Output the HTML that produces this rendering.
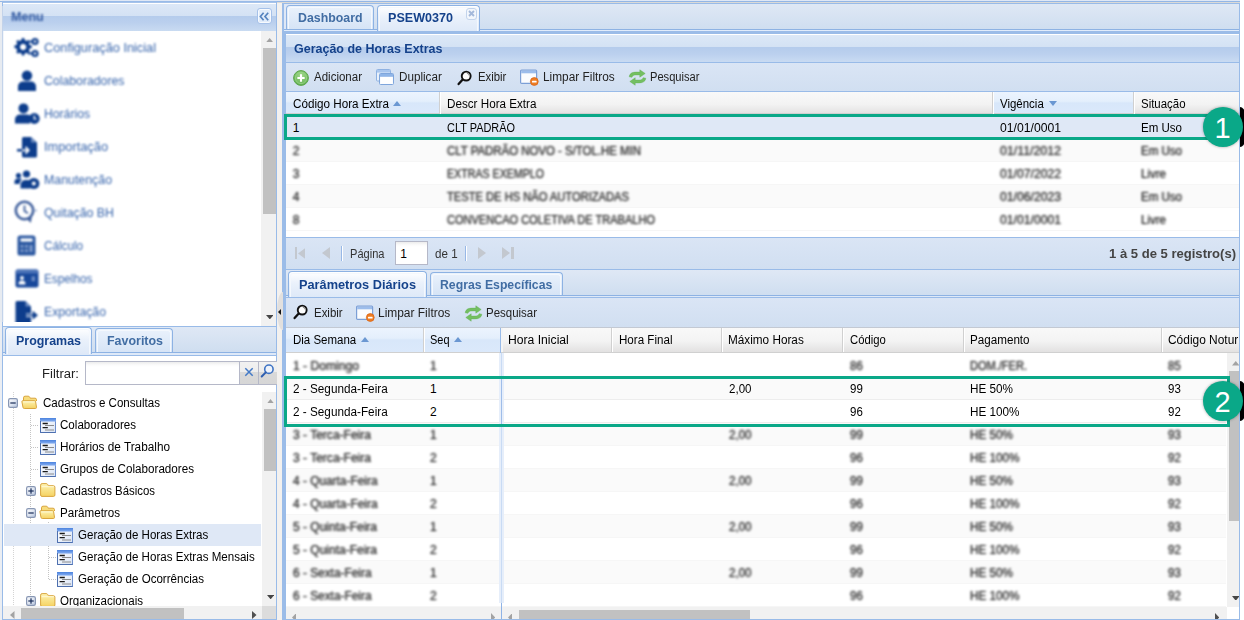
<!DOCTYPE html>
<html>
<head>
<meta charset="utf-8">
<title>PSEW0370</title>
<style>
*{box-sizing:border-box;margin:0;padding:0}
html,body{width:1244px;height:620px;overflow:hidden;background:#fff}
body{font-family:"Liberation Sans",sans-serif;font-size:12px;color:#000;position:relative}
.a{position:absolute}
.t{position:absolute;white-space:nowrap;line-height:16px;height:16px;transform-origin:0 50%}
.hd{background:linear-gradient(#dce8f7 0%,#d4e2f4 43%,#b5ccec 46%,#bbd0ee 70%,#c9dbf2 100%)}
.strip{background:linear-gradient(#dfe8f5,#cfdef0)}
.tb{background:linear-gradient(#dae5f5,#d1dff1)}
.gh{background:linear-gradient(#f9f9f9 0%,#f3f3f3 55%,#e2e1e1 100%)}
.ghs{background:linear-gradient(#ecf4fe 0%,#e4effc 42%,#d8e7fa 50%,#dbe9fb 100%)}
.tab{position:absolute;border:1px solid #8db2e3;border-bottom:none;border-radius:4px 4px 0 0;background:linear-gradient(#eaf2fc,#d6e4f6)}
.tab i{position:absolute;left:1px;right:1px;top:1px;bottom:0;border:1px solid #f4f8fd;border-bottom:none;border-radius:3px 3px 0 0}
.tab.on{background:linear-gradient(#ffffff,#eaf1fb 45%,#dee9f8)}
.row{position:absolute;height:23px;border-bottom:1px solid #ededed;background:#fff}
.alt{background:#fafafa}
.sb{background:#f1f1f1}
.th{background:#c1c1c1}
</style>
</head>
<body>
<div class="a " style="left:0px;top:0px;width:1240px;height:620px;background:#dfe8f6"></div>
<div class="a " style="left:0px;top:0px;width:2px;height:620px;background:#ebeef3"></div>
<div class="a " style="left:277px;top:2px;width:5px;height:618px;background:#f3f1ef"></div>
<div class="a " style="left:0px;top:1px;width:1240px;height:1px;background:#93b6e6"></div>
<!-- LEFT -->
<div class="a " style="left:2px;top:1px;width:275px;height:619px;border:1px solid #99bbe8;border-bottom:none;background:#fff"></div>
<div class="a " style="left:3px;top:2px;width:273px;height:1px;background:#a6c3ea"></div>
<div class="a " style="left:3px;top:3px;width:273px;height:1px;background:#fff"></div>
<div class="a hd" style="left:3px;top:4px;width:273px;height:27px;"></div>
<div class="a " style="left:0px;top:6px;width:2px;height:316px;background:#e7ebf1"></div>
<div class="a " style="left:2px;top:6px;width:1px;height:316px;background:#c3d3ea"></div>
<div class="a " style="left:3px;top:31px;width:1px;height:291px;background:#f1f5fb"></div>
<div class="t" style="top:9px;font-size:12.5px;left:10.70px;transform:scaleX(1.0018);font-weight:bold;color:#2f57a0;filter:blur(1px);">Menu</div>
<div class="a " style="left:257px;top:8px;width:15px;height:16px;border:1px solid #a5c1e9;border-radius:3px;background:#e1ecfa;box-shadow:inset 0 0 0 1px #f7fafe"></div>
<svg class="a" style="left:259px;top:12px;" width="11" height="9" viewBox="0 0 11 9"><path d="M4.600 0.800L1.400 4.500L4.600 8.200M9.200 0.800L6 4.500L9.200 8.200" fill="none" stroke="#5583bf" stroke-width="1.700"/></svg>
<div class="a sb" style="left:261px;top:31px;width:15px;height:295px;"></div>
<div class="a th" style="left:263px;top:48px;width:13px;height:166px;"></div>
<svg class="a" style="left:265.8px;top:37.7px;" width="7.3" height="4.4" viewBox="0 0 7.3 4.4"><polygon points="0,4.4 3.65,0 7.3,4.4" fill="#a3a3a3"/></svg>
<svg class="a" style="left:265.8px;top:314.8px;" width="7.6" height="4.4" viewBox="0 0 7.6 4.4"><polygon points="0,0 7.6,0 3.8,4.4" fill="#454545"/></svg>
<!-- menu items (blurred) -->
<div class="a" style="left:0;top:31px;width:262px;height:291px;overflow:hidden"><div class="a" style="filter:blur(0.8px);left:0;top:0;width:262px;height:300px">
 <!-- 1 Configuracao: gears -->
 <svg class="a" style="left:14px;top:6px" width="26" height="21" viewBox="0 0 26 21">
  <g fill="#0d3d8c">
   <path d="M8 1 l2.2 0 l.5 2 l1.8 .9 l1.8-1 l1.6 1.6 l-1 1.8 l.8 1.7 l2 .6 l0 2.3 l-2 .6 l-.8 1.8 l1 1.8 l-1.6 1.6 l-1.8-1 l-1.8 .8 l-.5 2 l-2.2 0 l-.6-2 l-1.8-.8 l-1.8 1 l-1.6-1.6 l1-1.8 l-.8-1.8 l-2-.6 l0-2.3 l2-.6 l.8-1.7 l-1-1.8 l1.6-1.6 l1.8 1 l1.8-.9 z M9.1 6.8 a3.2 3.2 0 1 0 .01 0 z" fill-rule="evenodd"/>
   <circle cx="21" cy="4.5" r="3.6"/><circle cx="21" cy="16.5" r="3.6"/>
   <rect x="14" y="3.7" width="6" height="1.8"/><rect x="14" y="15.6" width="6" height="1.8"/>
  </g>
  <circle cx="21" cy="4.5" r="1.3" fill="#fff"/><circle cx="21" cy="16.5" r="1.3" fill="#fff"/>
 </svg>
 <!-- 2 Colaboradores: user -->
 <svg class="a" style="left:17px;top:39px" width="20" height="22" viewBox="0 0 20 22">
  <g fill="#0d3d8c"><circle cx="10" cy="5.6" r="5.2"/><path d="M1 21 v-4.5 a5 5 0 0 1 5-5 h8 a5 5 0 0 1 5 5 v4.5 z"/></g>
 </svg>
 <!-- 3 Horarios: user + clock -->
 <svg class="a" style="left:14px;top:72px" width="26" height="22" viewBox="0 0 26 22">
  <g fill="#0d3d8c"><circle cx="9.5" cy="5.4" r="5"/><path d="M1 20.5 v-4 a5 5 0 0 1 5-5 h7 a5 5 0 0 1 3 1 v8 z"/><circle cx="20.3" cy="15.5" r="5.4"/></g>
  <path d="M20.3 12.6 v3.2 h2.2" stroke="#fff" stroke-width="1.3" fill="none"/>
 </svg>
 <!-- 4 Importacao: file import -->
 <svg class="a" style="left:16px;top:105px" width="22" height="22" viewBox="0 0 22 22">
  <path d="M6 1 h9 l6 5.5 v13.5 a1.5 1.5 0 0 1 -1.5 1.5 h-12 a1.5 1.5 0 0 1 -1.5 -1.5 v-4.5 h-5 v-2.4 h5 v-10.6 a1.5 1.5 0 0 1 1.5 -1.5 z" fill="#0d3d8c"/>
  <path d="M6 14.3 h5.5 M9.5 11 l3.2 3.3 l-3.2 3.3" stroke="#fff" stroke-width="1.8" fill="none"/>
  <path d="M15 1 v5.5 h6 z" fill="#6d8cc0"/>
 </svg>
 <!-- 5 Manutencao: users cog -->
 <svg class="a" style="left:14px;top:139px" width="26" height="20" viewBox="0 0 26 20">
  <g fill="#0d3d8c"><circle cx="12.5" cy="4" r="3.6"/><circle cx="4.5" cy="5.5" r="2.6"/><path d="M0.5 14 v-2 a3.5 3.5 0 0 1 3.5 -3.5 h2 a3 3 0 0 1 2 .8 a6 6 0 0 0 -2.6 4.7 z"/><path d="M6.5 18.5 v-3.5 a5 5 0 0 1 5 -5 h2 a5 5 0 0 1 3 1 v7.500 z"/><circle cx="19.8" cy="13.5" r="5.6"/></g>
  <circle cx="19.8" cy="13.5" r="2" fill="#fff"/>
 </svg>
 <!-- 6 Quitacao: clock -->
 <svg class="a" style="left:14px;top:169px" width="24" height="25" viewBox="0 0 24 25">
  <circle cx="10.5" cy="10.5" r="8.7" fill="none" stroke="#3f5f9c" stroke-width="2.6"/>
  <path d="M10.5 5.5 v5.5 l3.4 2.2" stroke="#3f5f9c" stroke-width="1.8" fill="none"/>
  <path d="M13 19 l3.8 4 l1-6 z" fill="#3f5f9c"/>
  <path d="M21 10.5 h2" stroke="#8fa5cc" stroke-width="1.5"/>
 </svg>
 <!-- 7 Calculo: calculator -->
 <svg class="a" style="left:17px;top:204px" width="19" height="21" viewBox="0 0 19 21">
  <rect x="0.5" y="0.5" width="18" height="20" rx="2.6" fill="#2a57a0"/>
  <rect x="3.5" y="3.4" width="12" height="3.2" fill="#fff"/>
  <g fill="#7f9bcb"><rect x="3.5" y="10" width="3" height="2.6"/><rect x="8" y="10" width="3" height="2.6"/><rect x="12.5" y="10" width="3" height="7"/><rect x="3.5" y="14.4" width="3" height="2.6"/><rect x="8" y="14.4" width="3" height="2.6"/></g>
 </svg>
 <!-- 8 Espelhos: id card -->
 <svg class="a" style="left:15px;top:238px" width="24" height="19" viewBox="0 0 24 19">
  <rect x="0.5" y="0.5" width="23" height="18" rx="2.2" fill="#17479a"/>
  <rect x="0.5" y="0.5" width="23" height="4" rx="2" fill="#4d74b8"/>
  <circle cx="7" cy="9" r="1.9" fill="#fff"/><path d="M3.6 15.5 v-1.2 a2.6 2.6 0 0 1 2.6-2.6 h1.6 a2.6 2.6 0 0 1 2.6 2.6 v1.2 z" fill="#fff"/>
  <path d="M16.5 8.5 h3.5 M16.500 11 h3.5" stroke="#9db3db" stroke-width="1.4"/>
 </svg>
 <!-- 9 Exportacao: file export -->
 <svg class="a" style="left:15px;top:269px" width="24" height="25" viewBox="0 0 24 25">
  <path d="M2 1 h8.500 l5.500 5.500 v7 h-5 v3.600 h5 v7.900 h-15.500 v-22.500 a1.500 1.500 0 0 1 1.500 -1.500 z" fill="#0d3d8c"/>
  <path d="M10.500 1 v5.500 h5.500 z" fill="#6d8cc0"/>
  <path d="M11 15.200 h8 M18.300 12.400 l3.400 2.800 l-3.400 2.800 z" stroke="#0d3d8c" stroke-width="1.600" fill="#0d3d8c"/>
 </svg>
</div></div>

<div class="t" style="top:40px;font-size:12px;left:43.50px;transform:scaleX(1.0626);color:#3563ab;filter:blur(0.9px);">Configuração Inicial</div>
<div class="t" style="top:73px;font-size:12px;left:43.50px;transform:scaleX(1.0226);color:#3563ab;filter:blur(0.9px);">Colaboradores</div>
<div class="t" style="top:106px;font-size:12px;left:43.50px;transform:scaleX(1.0141);color:#3563ab;filter:blur(0.9px);">Horários</div>
<div class="t" style="top:139px;font-size:12px;left:43.50px;transform:scaleX(1.0661);color:#3563ab;filter:blur(0.9px);">Importação</div>
<div class="t" style="top:172px;font-size:12px;left:43.50px;transform:scaleX(1.0296);color:#3563ab;filter:blur(0.9px);">Manutenção</div>
<div class="t" style="top:205px;font-size:12px;left:43.50px;transform:scaleX(1.0287);color:#3563ab;filter:blur(0.9px);">Quitação BH</div>
<div class="t" style="top:238px;font-size:12px;left:43.50px;transform:scaleX(0.9742);color:#3563ab;filter:blur(0.9px);">Cálculo</div>
<div class="t" style="top:271px;font-size:12px;left:43.50px;transform:scaleX(0.9823);color:#3563ab;filter:blur(0.9px);">Espelhos</div>
<div class="t" style="top:304px;font-size:12px;left:43.50px;transform:scaleX(1.0214);color:#3563ab;filter:blur(0.9px);">Exportação</div>
<div class="a " style="left:3px;top:326px;width:273px;height:1px;background:#99bbe8"></div>
<div class="a strip" style="left:3px;top:327px;width:273px;height:25px;"></div>
<div class="a " style="left:3px;top:352px;width:273px;height:1px;background:#8db2e3"></div>
<div class="a " style="left:3px;top:353px;width:273px;height:2px;background:#dee9f8"></div>
<div class="a " style="left:3px;top:355px;width:273px;height:1px;background:#99bbe8"></div>
<div class="tab on" style="left:5px;top:327px;width:87px;height:27px"><i></i></div>
<div class="tab" style="left:95px;top:328px;width:78px;height:24px"><i></i></div>
<div class="t" style="top:333px;font-size:12.5px;left:16.00px;transform:scaleX(0.9952);font-weight:bold;color:#15428b;">Programas</div>
<div class="t" style="top:333px;font-size:12.5px;left:107.00px;transform:scaleX(0.9953);font-weight:bold;color:#416da3;">Favoritos</div>
<div class="t" style="top:366px;font-size:12.3px;left:41.50px;transform:scaleX(1.0619);color:#222;">Filtrar:</div>
<div class="a " style="left:85px;top:361px;width:155px;height:24px;border:1px solid #b5b8c8;background:linear-gradient(#ececec 0,#fbfbfb 3px,#fff 5px)"></div>
<div class="a " style="left:239px;top:361px;width:20px;height:24px;border:1px solid #b5b8c8;background:linear-gradient(#f1f1f1 0,#ededed 45%,#d9d9d9 46%,#d6d6d6 100%)"></div>
<div class="a " style="left:258px;top:361px;width:19px;height:24px;border:1px solid #b5b8c8;background:linear-gradient(#f1f1f1 0,#ededed 45%,#d9d9d9 46%,#d6d6d6 100%);border-right:none"></div>
<svg class="a" style="left:243.5px;top:366.5px;" width="10" height="10" viewBox="0 0 10 10"><path d="M1.300 1.300L8.700 8.700M8.700 1.300L1.300 8.700" stroke="#4379c6" stroke-width="1.500"/></svg>
<svg class="a" style="left:260px;top:363px;" width="15" height="15" viewBox="0 0 15 15"><circle cx="8.900" cy="6.200" r="4.200" fill="#eef3fb" stroke="#3e73c4" stroke-width="1.600"/><path d="M5.800 9.400L1.700 13.500" stroke="#2f5fb0" stroke-width="2" stroke-linecap="round"/></svg>
<div class="a " style="left:13px;top:392px;width:1px;height:7px;background-image:linear-gradient(#d4d4d4 1px,transparent 1px);background-size:1px 2px"></div>
<div class="a " style="left:13px;top:408px;width:1px;height:198px;background-image:linear-gradient(#d4d4d4 1px,transparent 1px);background-size:1px 2px"></div>
<div class="a " style="left:30px;top:414px;width:1px;height:192px;background-image:linear-gradient(#c4c4c4 1px,transparent 1px);background-size:1px 2px"></div>
<div class="a " style="left:48px;top:522px;width:1px;height:57px;background-image:linear-gradient(#c4c4c4 1px,transparent 1px);background-size:1px 2px"></div>
<div class="a " style="left:31px;top:425px;width:7px;height:1px;background-image:linear-gradient(90deg,#c4c4c4 1px,transparent 1px);background-size:2px 1px"></div>
<div class="a " style="left:31px;top:447px;width:7px;height:1px;background-image:linear-gradient(90deg,#c4c4c4 1px,transparent 1px);background-size:2px 1px"></div>
<div class="a " style="left:31px;top:469px;width:7px;height:1px;background-image:linear-gradient(90deg,#c4c4c4 1px,transparent 1px);background-size:2px 1px"></div>
<div class="a " style="left:49px;top:535px;width:7px;height:1px;background-image:linear-gradient(90deg,#c4c4c4 1px,transparent 1px);background-size:2px 1px"></div>
<div class="a " style="left:49px;top:557px;width:7px;height:1px;background-image:linear-gradient(90deg,#c4c4c4 1px,transparent 1px);background-size:2px 1px"></div>
<div class="a " style="left:49px;top:579px;width:7px;height:1px;background-image:linear-gradient(90deg,#c4c4c4 1px,transparent 1px);background-size:2px 1px"></div>
<div class="a " style="left:4px;top:524px;width:257px;height:22px;background:#dfe8f6"></div>
<svg class="a" style="left:7.5px;top:398.3px;" width="10" height="10" viewBox="0 0 10 10"><defs><linearGradient id="ge" x1="0" y1="0" x2="1" y2="1"><stop offset="0" stop-color="#ffffff"/><stop offset="0.5" stop-color="#dfe6f2"/><stop offset="1" stop-color="#b3c2dc"/></linearGradient></defs>
<rect x="0.600" y="0.600" width="8.800" height="8.800" rx="1.600" fill="url(#ge)" stroke="#8897b4" stroke-width="1.200"/><rect x="2.300" y="4.400" width="5.400" height="1.200" fill="#1a2d5a"/></svg>
<svg class="a" style="left:21.2px;top:395.2px;" width="17" height="14" viewBox="0 0 17 14"><defs><linearGradient id="gf" x1="0" y1="0" x2="0" y2="1"><stop offset="0" stop-color="#fdf4b4"/><stop offset="1" stop-color="#f5d262"/></linearGradient></defs>
<path d="M2.500 12.500V2.800Q2.500 1.200 4 1.200H7.200Q8.300 1.200 8.800 2.300L9.200 3.200H14Q15.500 3.200 15.500 4.700V6" fill="#f7dc7c" stroke="#d9a53e" stroke-width="1"/>
<path d="M0.900 6.700Q0.700 5.700 1.800 5.700H13.300Q14.500 5.700 14.600 6.700L15.500 12.300Q15.600 13.500 14.300 13.500H3.300Q2.200 13.500 2 12.400Z" fill="url(#gf)" stroke="#d9a53e" stroke-width="1"/><path d="M2.200 6.900H13.600" stroke="#fffbe0" stroke-width="0.900"/></svg>
<div class="t" style="top:395px;font-size:12.3px;left:42.60px;transform:scaleX(0.9405);">Cadastros e Consultas</div>
<svg class="a" style="left:40px;top:417.9px;" width="16" height="15" viewBox="0 0 16 15"><defs><linearGradient id="gm" x1="0" y1="0" x2="1" y2="1"><stop offset="0" stop-color="#ffffff"/><stop offset="1" stop-color="#d9e4f6"/></linearGradient><linearGradient id="gt" x1="0" y1="0" x2="0" y2="1"><stop offset="0" stop-color="#4a82de"/><stop offset="1" stop-color="#86aef0"/></linearGradient></defs>
<rect x="0.500" y="0.500" width="15" height="14" fill="url(#gm)" stroke="#6c8dcb"/><rect x="0" y="0" width="16" height="3.600" fill="url(#gt)"/><path d="M0.500 3V14.500H15.500" stroke="#4d6fae" fill="none"/>
<path d="M2.600 5.500H7.800M2.600 9.600H7.800" stroke="#1a1a1a" stroke-width="1.300"/><path d="M5 7.500H14M5 12H14" stroke="#8c8c8c" stroke-width="1.200"/></svg>
<div class="t" style="top:417px;font-size:12.3px;left:59.70px;transform:scaleX(0.9421);">Colaboradores</div>
<svg class="a" style="left:40px;top:439.9px;" width="16" height="15" viewBox="0 0 16 15"><defs><linearGradient id="gm" x1="0" y1="0" x2="1" y2="1"><stop offset="0" stop-color="#ffffff"/><stop offset="1" stop-color="#d9e4f6"/></linearGradient><linearGradient id="gt" x1="0" y1="0" x2="0" y2="1"><stop offset="0" stop-color="#4a82de"/><stop offset="1" stop-color="#86aef0"/></linearGradient></defs>
<rect x="0.500" y="0.500" width="15" height="14" fill="url(#gm)" stroke="#6c8dcb"/><rect x="0" y="0" width="16" height="3.600" fill="url(#gt)"/><path d="M0.500 3V14.500H15.500" stroke="#4d6fae" fill="none"/>
<path d="M2.600 5.500H7.800M2.600 9.600H7.800" stroke="#1a1a1a" stroke-width="1.300"/><path d="M5 7.500H14M5 12H14" stroke="#8c8c8c" stroke-width="1.200"/></svg>
<div class="t" style="top:439px;font-size:12.3px;left:59.70px;transform:scaleX(0.9578);">Horários de Trabalho</div>
<svg class="a" style="left:40px;top:461.9px;" width="16" height="15" viewBox="0 0 16 15"><defs><linearGradient id="gm" x1="0" y1="0" x2="1" y2="1"><stop offset="0" stop-color="#ffffff"/><stop offset="1" stop-color="#d9e4f6"/></linearGradient><linearGradient id="gt" x1="0" y1="0" x2="0" y2="1"><stop offset="0" stop-color="#4a82de"/><stop offset="1" stop-color="#86aef0"/></linearGradient></defs>
<rect x="0.500" y="0.500" width="15" height="14" fill="url(#gm)" stroke="#6c8dcb"/><rect x="0" y="0" width="16" height="3.600" fill="url(#gt)"/><path d="M0.500 3V14.500H15.500" stroke="#4d6fae" fill="none"/>
<path d="M2.600 5.500H7.800M2.600 9.600H7.800" stroke="#1a1a1a" stroke-width="1.300"/><path d="M5 7.500H14M5 12H14" stroke="#8c8c8c" stroke-width="1.200"/></svg>
<div class="t" style="top:461px;font-size:12.3px;left:59.70px;transform:scaleX(0.9470);">Grupos de Colaboradores</div>
<svg class="a" style="left:25.5px;top:486.3px;" width="10" height="10" viewBox="0 0 10 10"><defs><linearGradient id="ge" x1="0" y1="0" x2="1" y2="1"><stop offset="0" stop-color="#ffffff"/><stop offset="0.5" stop-color="#dfe6f2"/><stop offset="1" stop-color="#b3c2dc"/></linearGradient></defs>
<rect x="0.600" y="0.600" width="8.800" height="8.800" rx="1.600" fill="url(#ge)" stroke="#8897b4" stroke-width="1.200"/><rect x="2.300" y="4.400" width="5.400" height="1.200" fill="#1a2d5a"/><rect x="4.400" y="2.300" width="1.200" height="5.400" fill="#1a2d5a"/></svg>
<svg class="a" style="left:40.1px;top:483.0px;" width="16" height="14" viewBox="0 0 16 14"><defs><linearGradient id="gf2" x1="0" y1="0" x2="0" y2="1"><stop offset="0" stop-color="#fdf4b4"/><stop offset="1" stop-color="#f5d262"/></linearGradient></defs>
<path d="M0.600 12V2.200Q0.600 0.600 2.100 0.600H6.200Q7.300 0.600 7.800 1.700L8.300 2.700H13.400Q14.900 2.700 14.900 4.200V12Q14.900 13.400 13.500 13.400H2Q0.600 13.400 0.600 12Z" fill="url(#gf2)" stroke="#d9a53e" stroke-width="1"/><path d="M1.600 3.700H13.900" stroke="#fffbe0" stroke-width="0.900"/></svg>
<div class="t" style="top:483px;font-size:12.3px;left:59.70px;transform:scaleX(0.9265);">Cadastros Básicos</div>
<svg class="a" style="left:25.5px;top:508.3px;" width="10" height="10" viewBox="0 0 10 10"><defs><linearGradient id="ge" x1="0" y1="0" x2="1" y2="1"><stop offset="0" stop-color="#ffffff"/><stop offset="0.5" stop-color="#dfe6f2"/><stop offset="1" stop-color="#b3c2dc"/></linearGradient></defs>
<rect x="0.600" y="0.600" width="8.800" height="8.800" rx="1.600" fill="url(#ge)" stroke="#8897b4" stroke-width="1.200"/><rect x="2.300" y="4.400" width="5.400" height="1.200" fill="#1a2d5a"/></svg>
<svg class="a" style="left:39.2px;top:505.2px;" width="17" height="14" viewBox="0 0 17 14"><defs><linearGradient id="gf" x1="0" y1="0" x2="0" y2="1"><stop offset="0" stop-color="#fdf4b4"/><stop offset="1" stop-color="#f5d262"/></linearGradient></defs>
<path d="M2.500 12.500V2.800Q2.500 1.200 4 1.200H7.200Q8.300 1.200 8.800 2.300L9.200 3.200H14Q15.500 3.200 15.500 4.700V6" fill="#f7dc7c" stroke="#d9a53e" stroke-width="1"/>
<path d="M0.900 6.700Q0.700 5.700 1.800 5.700H13.300Q14.500 5.700 14.600 6.700L15.500 12.300Q15.600 13.500 14.300 13.500H3.300Q2.200 13.500 2 12.400Z" fill="url(#gf)" stroke="#d9a53e" stroke-width="1"/><path d="M2.200 6.900H13.600" stroke="#fffbe0" stroke-width="0.900"/></svg>
<div class="t" style="top:505px;font-size:12.3px;left:59.70px;transform:scaleX(0.9440);">Parâmetros</div>
<svg class="a" style="left:57.1px;top:527.9px;" width="16" height="15" viewBox="0 0 16 15"><defs><linearGradient id="gm" x1="0" y1="0" x2="1" y2="1"><stop offset="0" stop-color="#ffffff"/><stop offset="1" stop-color="#d9e4f6"/></linearGradient><linearGradient id="gt" x1="0" y1="0" x2="0" y2="1"><stop offset="0" stop-color="#4a82de"/><stop offset="1" stop-color="#86aef0"/></linearGradient></defs>
<rect x="0.500" y="0.500" width="15" height="14" fill="url(#gm)" stroke="#6c8dcb"/><rect x="0" y="0" width="16" height="3.600" fill="url(#gt)"/><path d="M0.500 3V14.500H15.500" stroke="#4d6fae" fill="none"/>
<path d="M2.600 5.500H7.800M2.600 9.600H7.800" stroke="#1a1a1a" stroke-width="1.300"/><path d="M5 7.500H14M5 12H14" stroke="#8c8c8c" stroke-width="1.200"/></svg>
<div class="t" style="top:527px;font-size:12.3px;left:78.00px;transform:scaleX(0.9391);">Geração de Horas Extras</div>
<svg class="a" style="left:57.1px;top:549.9px;" width="16" height="15" viewBox="0 0 16 15"><defs><linearGradient id="gm" x1="0" y1="0" x2="1" y2="1"><stop offset="0" stop-color="#ffffff"/><stop offset="1" stop-color="#d9e4f6"/></linearGradient><linearGradient id="gt" x1="0" y1="0" x2="0" y2="1"><stop offset="0" stop-color="#4a82de"/><stop offset="1" stop-color="#86aef0"/></linearGradient></defs>
<rect x="0.500" y="0.500" width="15" height="14" fill="url(#gm)" stroke="#6c8dcb"/><rect x="0" y="0" width="16" height="3.600" fill="url(#gt)"/><path d="M0.500 3V14.500H15.500" stroke="#4d6fae" fill="none"/>
<path d="M2.600 5.500H7.800M2.600 9.600H7.800" stroke="#1a1a1a" stroke-width="1.300"/><path d="M5 7.500H14M5 12H14" stroke="#8c8c8c" stroke-width="1.200"/></svg>
<div class="t" style="top:549px;font-size:12.3px;left:78.00px;transform:scaleX(0.9401);">Geração de Horas Extras Mensais</div>
<svg class="a" style="left:57.1px;top:571.9px;" width="16" height="15" viewBox="0 0 16 15"><defs><linearGradient id="gm" x1="0" y1="0" x2="1" y2="1"><stop offset="0" stop-color="#ffffff"/><stop offset="1" stop-color="#d9e4f6"/></linearGradient><linearGradient id="gt" x1="0" y1="0" x2="0" y2="1"><stop offset="0" stop-color="#4a82de"/><stop offset="1" stop-color="#86aef0"/></linearGradient></defs>
<rect x="0.500" y="0.500" width="15" height="14" fill="url(#gm)" stroke="#6c8dcb"/><rect x="0" y="0" width="16" height="3.600" fill="url(#gt)"/><path d="M0.500 3V14.500H15.500" stroke="#4d6fae" fill="none"/>
<path d="M2.600 5.500H7.800M2.600 9.600H7.800" stroke="#1a1a1a" stroke-width="1.300"/><path d="M5 7.500H14M5 12H14" stroke="#8c8c8c" stroke-width="1.200"/></svg>
<div class="t" style="top:571px;font-size:12.3px;left:78.00px;transform:scaleX(0.9405);">Geração de Ocorrências</div>
<svg class="a" style="left:25.5px;top:596.3px;" width="10" height="10" viewBox="0 0 10 10"><defs><linearGradient id="ge" x1="0" y1="0" x2="1" y2="1"><stop offset="0" stop-color="#ffffff"/><stop offset="0.5" stop-color="#dfe6f2"/><stop offset="1" stop-color="#b3c2dc"/></linearGradient></defs>
<rect x="0.600" y="0.600" width="8.800" height="8.800" rx="1.600" fill="url(#ge)" stroke="#8897b4" stroke-width="1.200"/><rect x="2.300" y="4.400" width="5.400" height="1.200" fill="#1a2d5a"/><rect x="4.400" y="2.300" width="1.200" height="5.400" fill="#1a2d5a"/></svg>
<svg class="a" style="left:40.1px;top:593.0px;" width="16" height="14" viewBox="0 0 16 14"><defs><linearGradient id="gf2" x1="0" y1="0" x2="0" y2="1"><stop offset="0" stop-color="#fdf4b4"/><stop offset="1" stop-color="#f5d262"/></linearGradient></defs>
<path d="M0.600 12V2.200Q0.600 0.600 2.100 0.600H6.200Q7.300 0.600 7.800 1.700L8.300 2.700H13.400Q14.900 2.700 14.900 4.200V12Q14.900 13.400 13.500 13.400H2Q0.600 13.400 0.600 12Z" fill="url(#gf2)" stroke="#d9a53e" stroke-width="1"/><path d="M1.600 3.700H13.900" stroke="#fffbe0" stroke-width="0.900"/></svg>
<div class="t" style="top:593px;font-size:12.3px;left:59.70px;transform:scaleX(0.9412);">Organizacionais</div>
<div class="a sb" style="left:262px;top:392px;width:14px;height:214px;"></div>
<div class="a th" style="left:264px;top:409px;width:12px;height:62px;"></div>
<svg class="a" style="left:267px;top:398.5px;" width="7" height="4.5" viewBox="0 0 7 4.5"><polygon points="0,4.5 3.5,0 7,4.5" fill="#a3a3a3"/></svg>
<svg class="a" style="left:266.8px;top:594.8px;" width="7.3" height="4.3" viewBox="0 0 7.3 4.3"><polygon points="0,0 7.3,0 3.65,4.3" fill="#454545"/></svg>
<div class="a sb" style="left:3px;top:606px;width:259px;height:13px;"></div>
<div class="a th" style="left:21px;top:608px;width:163px;height:11px;"></div>
<svg class="a" style="left:10px;top:610.5px;" width="4.5" height="8" viewBox="0 0 4.5 8"><polygon points="4.5,0 4.5,8 0,4.0" fill="#a3a3a3"/></svg>
<svg class="a" style="left:252px;top:610.5px;" width="4.5" height="8" viewBox="0 0 4.5 8"><polygon points="0,0 4.5,4.0 0,8" fill="#505050"/></svg>
<div class="a " style="left:262px;top:606px;width:14px;height:13px;background:#dcdcdc"></div>
<div class="a " style="left:2px;top:619px;width:275px;height:1px;background:#99bbe8"></div>
<!-- MAIN -->
<div class="a " style="left:282px;top:3px;width:958px;height:617px;border:1px solid #99bbe8;background:#fff"></div>
<div class="a " style="left:277px;top:2px;width:963px;height:1px;background:#dcdad6"></div>
<div class="a " style="left:282px;top:3px;width:958px;height:1px;background:#99bbe8"></div>
<div class="a " style="left:282px;top:3px;width:2px;height:617px;background:#9bbce8"></div>
<div class="a " style="left:284px;top:4px;width:2px;height:27px;background:#dfe8f6"></div>
<div class="a " style="left:284px;top:31px;width:2px;height:589px;background:#9bbce8"></div>
<div class="a strip" style="left:286px;top:4px;width:953px;height:25px;"></div>
<div class="a " style="left:284px;top:29px;width:955px;height:1px;background:#8db2e3"></div>
<div class="a " style="left:284px;top:30px;width:955px;height:1px;background:#e1ecfb"></div>
<div class="a " style="left:282px;top:31px;width:957px;height:3px;background:#9bbce8"></div>
<div class="tab" style="left:286px;top:5px;width:88px;height:24px"><i></i></div>
<div class="tab on" style="left:377px;top:5px;width:103px;height:26px"><i></i></div>
<div class="t" style="top:10px;font-size:12.5px;left:297.50px;transform:scaleX(0.9878);font-weight:bold;color:#416da3;">Dashboard</div>
<div class="t" style="top:10px;font-size:12.5px;left:388.00px;transform:scaleX(1.0058);font-weight:bold;color:#15428b;">PSEW0370</div>
<div class="a " style="left:465.5px;top:8.2px;width:11.3px;height:11.6px;border:1px solid #c3d4ec;border-radius:3px;background:#f3f7fc"></div>
<svg class="a" style="left:467.6px;top:10.4px;" width="7" height="7" viewBox="0 0 7 7"><path d="M1 1L6 6M6 1L1 6" stroke="#a4b9db" stroke-width="1.900"/></svg>
<div class="a " style="left:286px;top:34px;width:953px;height:1px;background:#fff"></div>
<div class="a hd" style="left:286px;top:35px;width:953px;height:27px;"></div>
<div class="a " style="left:286px;top:62px;width:953px;height:1px;background:#99bbe8"></div>
<div class="t" style="top:41px;font-size:12.5px;left:294.00px;transform:scaleX(0.9986);font-weight:bold;color:#15428b;">Geração de Horas Extras</div>
<div class="a tb" style="left:286px;top:63px;width:953px;height:28px;"></div>
<div class="a " style="left:286px;top:91px;width:953px;height:1px;background:#99bbe8"></div>
<svg class="a" style="left:292.6px;top:70px;" width="16" height="16" viewBox="0 0 16 16"><defs><radialGradient id="ga" cx="50%" cy="35%" r="65%"><stop offset="0" stop-color="#a6dc93"/><stop offset="1" stop-color="#5fae4e"/></radialGradient></defs>
<circle cx="8" cy="8" r="7.4" fill="url(#ga)" stroke="#5da64d" stroke-width="1"/><circle cx="8" cy="8" r="5.6" fill="none" stroke="#9ad488" stroke-width="0.8"/>
<path d="M8 5.100v5.800M5.100 8h5.800" stroke="#fff" stroke-width="2" stroke-linecap="round"/></svg>
<div class="t" style="top:69px;font-size:12px;left:313.70px;transform:scaleX(0.9594);color:#222;">Adicionar</div>
<svg class="a" style="left:376px;top:68.8px;" width="18" height="16" viewBox="0 0 18 16"><rect x="0.5" y="0.5" width="14" height="11.500" rx="1" fill="#e9f1fb" stroke="#8fb2e2"/><rect x="1" y="1" width="13" height="2.600" fill="#a9c6ee"/>
<rect x="3.500" y="4.500" width="14" height="11" rx="1" fill="#f6f9fd" stroke="#7fa6dc"/><rect x="4" y="5" width="13" height="2.800" fill="#8fb5e8"/><rect x="4.600" y="8" width="11.800" height="6.800" fill="#fff"/></svg>
<div class="t" style="top:69px;font-size:12px;left:398.60px;transform:scaleX(0.9724);color:#222;">Duplicar</div>
<svg class="a" style="left:456.45px;top:69.5px;" width="16" height="16" viewBox="0 0 16 16"><circle cx="10.200" cy="6.100" r="4.450" fill="#fdfdfd" stroke="#111" stroke-width="1.900"/><path d="M10.900 3.100a3 3 0 0 1 2.400 2.300" stroke="#8a8a8a" stroke-width="1.100" fill="none"/>
<path d="M6.700 9.600L2.600 14.100" stroke="#111" stroke-width="2.300" stroke-linecap="round"/></svg>
<div class="t" style="top:69px;font-size:12px;left:477.80px;transform:scaleX(0.9462);color:#222;">Exibir</div>
<svg class="a" style="left:519.6px;top:69.4px;" width="19" height="17" viewBox="0 0 19 17"><rect x="0.600" y="1.100" width="16" height="13.300" rx="1" fill="#fbfcfe" stroke="#7c9fd6" stroke-width="1.200"/><rect x="1.200" y="1.700" width="14.800" height="2.600" fill="#9dbdeb"/>
<circle cx="14.300" cy="12.500" r="3.900" fill="#ee7d22" stroke="#d9661a" stroke-width="0.800"/><rect x="12" y="11.700" width="4.600" height="1.700" rx="0.500" fill="#fff"/></svg>
<div class="t" style="top:69px;font-size:12px;left:542.60px;transform:scaleX(0.9878);color:#222;">Limpar Filtros</div>
<svg class="a" style="left:627.5px;top:69px;" width="19" height="17" viewBox="0 0 19 17"><g fill="#74bf62" stroke="#5fae4f" stroke-width="0.400">
<path d="M1.200 7.800C1.500 4.400 4.500 3.100 8 3.100H11.800V0.800L17.200 4.500L11.800 8.200V5.900H8C6 5.900 4.500 6.500 3.900 8.300Z"/>
<path d="M17.800 9.200C17.500 12.600 14.500 13.900 11 13.900H7.200V16.200L1.800 12.500L7.200 8.800V11.100H11C13 11.100 14.500 10.500 15.100 8.700Z"/></g></svg>
<div class="t" style="top:69px;font-size:12px;left:650.00px;transform:scaleX(0.9274);color:#222;">Pesquisar</div>
<div class="a gh" style="left:286px;top:92px;width:953px;height:22px;"></div>
<div class="a ghs" style="left:286px;top:92px;width:153px;height:22px;"></div>
<div class="a ghs" style="left:993px;top:92px;width:140px;height:22px;"></div>
<div class="a " style="left:286px;top:113px;width:953px;height:1px;background:#d0d0d0"></div>
<div class="a " style="left:439px;top:92px;width:1px;height:22px;background:#d0d0d0"></div>
<div class="a " style="left:440px;top:92px;width:1px;height:22px;background:#fff"></div>
<div class="a " style="left:992px;top:92px;width:1px;height:22px;background:#d0d0d0"></div>
<div class="a " style="left:993px;top:92px;width:1px;height:22px;background:#fff"></div>
<div class="a " style="left:1133px;top:92px;width:1px;height:22px;background:#d0d0d0"></div>
<div class="a " style="left:1134px;top:92px;width:1px;height:22px;background:#fff"></div>
<div class="t" style="top:96px;font-size:12px;left:292.70px;transform:scaleX(0.9725);">Código Hora Extra</div>
<svg class="a" style="left:392.7px;top:100.5px;" width="8" height="5" viewBox="0 0 8 5"><polygon points="0,5 4.0,0 8,5" fill="#6a97d2"/></svg>
<div class="t" style="top:96px;font-size:12px;left:446.80px;transform:scaleX(0.9725);">Descr Hora Extra</div>
<div class="t" style="top:96px;font-size:12px;left:1000.30px;transform:scaleX(0.9557);">Vigência</div>
<svg class="a" style="left:1049px;top:100.5px;" width="8" height="5" viewBox="0 0 8 5"><polygon points="0,0 8,0 4.0,5" fill="#6a97d2"/></svg>
<div class="t" style="top:96px;font-size:12px;left:1140.80px;transform:scaleX(0.9528);">Situação</div>
<div class="a " style="left:286px;top:116px;width:953px;height:23px;background:#dfe8f6;border-bottom:1px solid #dfe8f6"></div>
<div class="t" style="top:120px;font-size:12px;left:292.70px;">1</div>
<div class="t" style="top:120px;font-size:12px;left:446.80px;transform:scaleX(0.9105);">CLT PADRÃO</div>
<div class="t" style="top:120px;font-size:12px;left:1000.30px;transform:scaleX(1.0156);">01/01/0001</div>
<div class="t" style="top:120px;font-size:12px;left:1140.80px;transform:scaleX(0.9605);">Em Uso</div>
<div class="a " style="left:286px;top:139px;width:953px;height:23px;background:#fafafa;border-bottom:1px solid #f6f6f6"></div>
<div class="t" style="top:143px;font-size:12px;left:292.70px;color:rgba(0,0,0,0.5);filter:blur(0.9px);text-shadow:1px 0 0.5px rgba(0,0,0,0.28),-1px 0 0.5px rgba(0,0,0,0.28),0 1px 0.5px rgba(0,0,0,0.14),0 -1px 0.5px rgba(0,0,0,0.14);">2</div>
<div class="t" style="top:143px;font-size:12px;left:446.80px;transform:scaleX(0.9519);color:rgba(0,0,0,0.5);filter:blur(0.9px);text-shadow:1px 0 0.5px rgba(0,0,0,0.28),-1px 0 0.5px rgba(0,0,0,0.28),0 1px 0.5px rgba(0,0,0,0.14),0 -1px 0.5px rgba(0,0,0,0.14);">CLT PADRÃO NOVO - S/TOL.HE MIN</div>
<div class="t" style="top:143px;font-size:12px;left:1000.30px;transform:scaleX(1.0309);color:rgba(0,0,0,0.5);filter:blur(0.9px);text-shadow:1px 0 0.5px rgba(0,0,0,0.28),-1px 0 0.5px rgba(0,0,0,0.28),0 1px 0.5px rgba(0,0,0,0.14),0 -1px 0.5px rgba(0,0,0,0.14);">01/11/2012</div>
<div class="t" style="top:143px;font-size:12px;left:1140.80px;transform:scaleX(0.9605);color:rgba(0,0,0,0.5);filter:blur(0.9px);text-shadow:1px 0 0.5px rgba(0,0,0,0.28),-1px 0 0.5px rgba(0,0,0,0.28),0 1px 0.5px rgba(0,0,0,0.14),0 -1px 0.5px rgba(0,0,0,0.14);">Em Uso</div>
<div class="a " style="left:286px;top:162px;width:953px;height:23px;background:#fff;border-bottom:1px solid #f6f6f6"></div>
<div class="t" style="top:166px;font-size:12px;left:292.70px;color:rgba(0,0,0,0.5);filter:blur(0.9px);text-shadow:1px 0 0.5px rgba(0,0,0,0.28),-1px 0 0.5px rgba(0,0,0,0.28),0 1px 0.5px rgba(0,0,0,0.14),0 -1px 0.5px rgba(0,0,0,0.14);">3</div>
<div class="t" style="top:166px;font-size:12px;left:446.80px;transform:scaleX(0.8869);color:rgba(0,0,0,0.5);filter:blur(0.9px);text-shadow:1px 0 0.5px rgba(0,0,0,0.28),-1px 0 0.5px rgba(0,0,0,0.28),0 1px 0.5px rgba(0,0,0,0.14),0 -1px 0.5px rgba(0,0,0,0.14);">EXTRAS EXEMPLO</div>
<div class="t" style="top:166px;font-size:12px;left:1000.30px;transform:scaleX(1.0156);color:rgba(0,0,0,0.5);filter:blur(0.9px);text-shadow:1px 0 0.5px rgba(0,0,0,0.28),-1px 0 0.5px rgba(0,0,0,0.28),0 1px 0.5px rgba(0,0,0,0.14),0 -1px 0.5px rgba(0,0,0,0.14);">01/07/2022</div>
<div class="t" style="top:166px;font-size:12px;left:1140.80px;transform:scaleX(0.9610);color:rgba(0,0,0,0.5);filter:blur(0.9px);text-shadow:1px 0 0.5px rgba(0,0,0,0.28),-1px 0 0.5px rgba(0,0,0,0.28),0 1px 0.5px rgba(0,0,0,0.14),0 -1px 0.5px rgba(0,0,0,0.14);">Livre</div>
<div class="a " style="left:286px;top:185px;width:953px;height:23px;background:#fafafa;border-bottom:1px solid #f6f6f6"></div>
<div class="t" style="top:189px;font-size:12px;left:292.70px;color:rgba(0,0,0,0.5);filter:blur(0.9px);text-shadow:1px 0 0.5px rgba(0,0,0,0.28),-1px 0 0.5px rgba(0,0,0,0.28),0 1px 0.5px rgba(0,0,0,0.14),0 -1px 0.5px rgba(0,0,0,0.14);">4</div>
<div class="t" style="top:189px;font-size:12px;left:446.80px;transform:scaleX(0.9294);color:rgba(0,0,0,0.5);filter:blur(0.9px);text-shadow:1px 0 0.5px rgba(0,0,0,0.28),-1px 0 0.5px rgba(0,0,0,0.28),0 1px 0.5px rgba(0,0,0,0.14),0 -1px 0.5px rgba(0,0,0,0.14);">TESTE DE HS NÃO AUTORIZADAS</div>
<div class="t" style="top:189px;font-size:12px;left:1000.30px;transform:scaleX(1.0156);color:rgba(0,0,0,0.5);filter:blur(0.9px);text-shadow:1px 0 0.5px rgba(0,0,0,0.28),-1px 0 0.5px rgba(0,0,0,0.28),0 1px 0.5px rgba(0,0,0,0.14),0 -1px 0.5px rgba(0,0,0,0.14);">01/06/2023</div>
<div class="t" style="top:189px;font-size:12px;left:1140.80px;transform:scaleX(0.9605);color:rgba(0,0,0,0.5);filter:blur(0.9px);text-shadow:1px 0 0.5px rgba(0,0,0,0.28),-1px 0 0.5px rgba(0,0,0,0.28),0 1px 0.5px rgba(0,0,0,0.14),0 -1px 0.5px rgba(0,0,0,0.14);">Em Uso</div>
<div class="a " style="left:286px;top:208px;width:953px;height:23px;background:#fff;border-bottom:1px solid #f6f6f6"></div>
<div class="t" style="top:212px;font-size:12px;left:292.70px;color:rgba(0,0,0,0.5);filter:blur(0.9px);text-shadow:1px 0 0.5px rgba(0,0,0,0.28),-1px 0 0.5px rgba(0,0,0,0.28),0 1px 0.5px rgba(0,0,0,0.14),0 -1px 0.5px rgba(0,0,0,0.14);">8</div>
<div class="t" style="top:212px;font-size:12px;left:446.80px;transform:scaleX(0.9192);color:rgba(0,0,0,0.5);filter:blur(0.9px);text-shadow:1px 0 0.5px rgba(0,0,0,0.28),-1px 0 0.5px rgba(0,0,0,0.28),0 1px 0.5px rgba(0,0,0,0.14),0 -1px 0.5px rgba(0,0,0,0.14);">CONVENCAO COLETIVA DE TRABALHO</div>
<div class="t" style="top:212px;font-size:12px;left:1000.30px;transform:scaleX(1.0156);color:rgba(0,0,0,0.5);filter:blur(0.9px);text-shadow:1px 0 0.5px rgba(0,0,0,0.28),-1px 0 0.5px rgba(0,0,0,0.28),0 1px 0.5px rgba(0,0,0,0.14),0 -1px 0.5px rgba(0,0,0,0.14);">01/01/0001</div>
<div class="t" style="top:212px;font-size:12px;left:1140.80px;transform:scaleX(0.9610);color:rgba(0,0,0,0.5);filter:blur(0.9px);text-shadow:1px 0 0.5px rgba(0,0,0,0.28),-1px 0 0.5px rgba(0,0,0,0.28),0 1px 0.5px rgba(0,0,0,0.14),0 -1px 0.5px rgba(0,0,0,0.14);">Livre</div>
<div class="a " style="left:286px;top:114px;width:953px;height:2px;background:#fff"></div>
<div class="a " style="left:286px;top:237px;width:953px;height:1px;background:#99bbe8"></div>
<div class="a tb" style="left:286px;top:238px;width:953px;height:31px;"></div>
<div class="a " style="left:286px;top:269px;width:953px;height:1px;background:#99bbe8"></div>
<div class="a " style="left:295px;top:247px;width:2px;height:12px;background:#c3c8cf"></div>
<svg class="a" style="left:297.5px;top:247.5px;" width="7.5" height="11" viewBox="0 0 7.5 11"><polygon points="7.5,0 7.5,11 0,5.5" fill="#c3c8cf"/></svg>
<svg class="a" style="left:321.6px;top:247px;" width="8" height="12" viewBox="0 0 8 12"><polygon points="8,0 8,12 0,6.0" fill="#c3c8cf"/></svg>
<div class="a " style="left:341px;top:246px;width:1px;height:15px;background:#98b8e6"></div>
<div class="a " style="left:342px;top:246px;width:1px;height:15px;background:#fff"></div>
<div class="t" style="top:246px;font-size:12px;left:350.20px;transform:scaleX(0.9231);color:#333;">Página</div>
<div class="a " style="left:395px;top:241px;width:33px;height:24px;border:1px solid #b5b8c8;background:linear-gradient(#ececec 0,#fbfbfb 3px,#fff 5px)"></div>
<div class="t" style="top:246px;font-size:12px;left:400.30px;">1</div>
<div class="t" style="top:246px;font-size:12px;left:435.00px;transform:scaleX(0.9675);color:#333;">de 1</div>
<div class="a " style="left:465px;top:246px;width:1px;height:15px;background:#98b8e6"></div>
<div class="a " style="left:466px;top:246px;width:1px;height:15px;background:#fff"></div>
<svg class="a" style="left:478px;top:247px;" width="8" height="12" viewBox="0 0 8 12"><polygon points="0,0 8,6.0 0,12" fill="#c3c8cf"/></svg>
<svg class="a" style="left:502px;top:247px;" width="8" height="12" viewBox="0 0 8 12"><polygon points="0,0 8,6.0 0,12" fill="#c3c8cf"/></svg>
<div class="a " style="left:511px;top:247px;width:3px;height:12px;background:#c3c8cf"></div>
<div class="t" style="top:246px;font-size:12.8px;left:1109.00px;transform:scaleX(1.0203);font-weight:bold;color:#444;">1 à 5 de 5 registro(s)</div>
<div class="a strip" style="left:286px;top:270px;width:953px;height:25px;"></div>
<div class="a " style="left:286px;top:295px;width:953px;height:1px;background:#8db2e3"></div>
<div class="a " style="left:286px;top:296px;width:953px;height:1px;background:#dee9f8"></div>
<div class="a " style="left:286px;top:297px;width:953px;height:1px;background:#99bbe8"></div>
<div class="tab on" style="left:288px;top:271px;width:139px;height:26px"><i></i></div>
<div class="tab" style="left:430px;top:272px;width:133px;height:23px"><i></i></div>
<div class="t" style="top:277px;font-size:12.5px;left:298.50px;transform:scaleX(1.0206);font-weight:bold;color:#15428b;">Parâmetros Diários</div>
<div class="t" style="top:277px;font-size:12.5px;left:439.70px;transform:scaleX(0.9794);font-weight:bold;color:#416da3;">Regras Específicas</div>
<div class="a tb" style="left:286px;top:298px;width:953px;height:29px;"></div>
<div class="a " style="left:286px;top:327px;width:953px;height:1px;background:#c3c9d3"></div>
<svg class="a" style="left:291.7px;top:304.4px;" width="16" height="16" viewBox="0 0 16 16"><circle cx="10.200" cy="6.100" r="4.450" fill="#fdfdfd" stroke="#111" stroke-width="1.900"/><path d="M10.900 3.100a3 3 0 0 1 2.400 2.300" stroke="#8a8a8a" stroke-width="1.100" fill="none"/>
<path d="M6.700 9.600L2.600 14.100" stroke="#111" stroke-width="2.300" stroke-linecap="round"/></svg>
<div class="t" style="top:305px;font-size:12px;left:313.80px;transform:scaleX(0.9528);color:#222;">Exibir</div>
<svg class="a" style="left:355.6px;top:304.9px;" width="19" height="17" viewBox="0 0 19 17"><rect x="0.600" y="1.100" width="16" height="13.300" rx="1" fill="#fbfcfe" stroke="#7c9fd6" stroke-width="1.200"/><rect x="1.200" y="1.700" width="14.800" height="2.600" fill="#9dbdeb"/>
<circle cx="14.300" cy="12.500" r="3.900" fill="#ee7d22" stroke="#d9661a" stroke-width="0.800"/><rect x="12" y="11.700" width="4.600" height="1.700" rx="0.500" fill="#fff"/></svg>
<div class="t" style="top:305px;font-size:12px;left:378.20px;transform:scaleX(0.9947);color:#222;">Limpar Filtros</div>
<svg class="a" style="left:463.6px;top:305px;" width="19" height="17" viewBox="0 0 19 17"><g fill="#74bf62" stroke="#5fae4f" stroke-width="0.400">
<path d="M1.200 7.800C1.500 4.400 4.500 3.100 8 3.100H11.800V0.800L17.200 4.500L11.800 8.200V5.900H8C6 5.900 4.500 6.500 3.900 8.300Z"/>
<path d="M17.800 9.200C17.500 12.600 14.500 13.900 11 13.900H7.200V16.200L1.800 12.500L7.200 8.800V11.100H11C13 11.100 14.500 10.500 15.100 8.700Z"/></g></svg>
<div class="t" style="top:305px;font-size:12px;left:485.80px;transform:scaleX(0.9555);color:#222;">Pesquisar</div>
<div class="a gh" style="left:286px;top:328px;width:953px;height:24px;"></div>
<div class="a ghs" style="left:286px;top:328px;width:215px;height:24px;"></div>
<div class="a " style="left:286px;top:352px;width:953px;height:1px;background:#d0d0d0"></div>
<div class="a " style="left:423px;top:328px;width:1px;height:24px;background:#d0d0d0"></div>
<div class="a " style="left:424px;top:328px;width:1px;height:24px;background:#fff"></div>
<div class="a " style="left:611px;top:328px;width:1px;height:24px;background:#d0d0d0"></div>
<div class="a " style="left:612px;top:328px;width:1px;height:24px;background:#fff"></div>
<div class="a " style="left:721px;top:328px;width:1px;height:24px;background:#d0d0d0"></div>
<div class="a " style="left:722px;top:328px;width:1px;height:24px;background:#fff"></div>
<div class="a " style="left:842px;top:328px;width:1px;height:24px;background:#d0d0d0"></div>
<div class="a " style="left:843px;top:328px;width:1px;height:24px;background:#fff"></div>
<div class="a " style="left:963px;top:328px;width:1px;height:24px;background:#d0d0d0"></div>
<div class="a " style="left:964px;top:328px;width:1px;height:24px;background:#fff"></div>
<div class="a " style="left:1161px;top:328px;width:1px;height:24px;background:#d0d0d0"></div>
<div class="a " style="left:1162px;top:328px;width:1px;height:24px;background:#fff"></div>
<div class="a " style="left:500px;top:328px;width:1px;height:279px;background:#99bbe8"></div>
<div class="a " style="left:501px;top:328px;width:2px;height:24px;background:#f4f4f4"></div>
<div class="t" style="top:332px;font-size:12px;left:292.50px;transform:scaleX(0.9569);">Dia Semana</div>
<svg class="a" style="left:361px;top:336.5px;" width="8" height="5" viewBox="0 0 8 5"><polygon points="0,5 4.0,0 8,5" fill="#6a97d2"/></svg>
<div class="t" style="top:332px;font-size:12px;left:430.00px;transform:scaleX(0.9129);">Seq</div>
<svg class="a" style="left:453.8px;top:336.5px;" width="8" height="5" viewBox="0 0 8 5"><polygon points="0,5 4.0,0 8,5" fill="#6a97d2"/></svg>
<div class="t" style="top:332px;font-size:12px;left:508.00px;transform:scaleX(1.0128);">Hora Inicial</div>
<div class="t" style="top:332px;font-size:12px;left:618.50px;transform:scaleX(0.9664);">Hora Final</div>
<div class="t" style="top:332px;font-size:12px;left:728.00px;transform:scaleX(0.9798);">Máximo Horas</div>
<div class="t" style="top:332px;font-size:12px;left:849.60px;transform:scaleX(0.9413);">Código</div>
<div class="t" style="top:332px;font-size:12px;left:970.00px;transform:scaleX(0.9708);">Pagamento</div>
<div class="a" style="left:1162px;top:328px;width:77px;height:24px;overflow:hidden">
<div class="t" style="top:4px;font-size:12px;left:6.30px;transform:scaleX(0.9941);">Código Notur</div>
</div>
<div class="a " style="left:286px;top:354px;width:940px;height:23px;background:#fff;border-bottom:1px solid #f6f6f6"></div>
<div class="t" style="top:358px;font-size:12px;left:292.50px;transform:scaleX(1.0096);color:rgba(0,0,0,0.5);filter:blur(0.9px);text-shadow:1px 0 0.5px rgba(0,0,0,0.28),-1px 0 0.5px rgba(0,0,0,0.28),0 1px 0.5px rgba(0,0,0,0.14),0 -1px 0.5px rgba(0,0,0,0.14);">1 - Domingo</div>
<div class="t" style="top:358px;font-size:12px;left:430.00px;color:rgba(0,0,0,0.5);filter:blur(0.9px);text-shadow:1px 0 0.5px rgba(0,0,0,0.28),-1px 0 0.5px rgba(0,0,0,0.28),0 1px 0.5px rgba(0,0,0,0.14),0 -1px 0.5px rgba(0,0,0,0.14);">1</div>
<div class="t" style="top:358px;font-size:12px;left:849.60px;transform:scaleX(0.9581);color:rgba(0,0,0,0.5);filter:blur(0.9px);text-shadow:1px 0 0.5px rgba(0,0,0,0.28),-1px 0 0.5px rgba(0,0,0,0.28),0 1px 0.5px rgba(0,0,0,0.14),0 -1px 0.5px rgba(0,0,0,0.14);">86</div>
<div class="t" style="top:358px;font-size:12px;left:970.00px;transform:scaleX(0.9194);color:rgba(0,0,0,0.5);filter:blur(0.9px);text-shadow:1px 0 0.5px rgba(0,0,0,0.28),-1px 0 0.5px rgba(0,0,0,0.28),0 1px 0.5px rgba(0,0,0,0.14),0 -1px 0.5px rgba(0,0,0,0.14);">DOM./FER.</div>
<div class="t" style="top:358px;font-size:12px;left:1168.30px;transform:scaleX(0.9581);color:rgba(0,0,0,0.5);filter:blur(0.9px);text-shadow:1px 0 0.5px rgba(0,0,0,0.28),-1px 0 0.5px rgba(0,0,0,0.28),0 1px 0.5px rgba(0,0,0,0.14),0 -1px 0.5px rgba(0,0,0,0.14);">85</div>
<div class="a " style="left:286px;top:377px;width:940px;height:23px;background:#fafafa;border-bottom:1px solid #ededed"></div>
<div class="t" style="top:381px;font-size:12px;left:292.50px;transform:scaleX(0.9790);">2 - Segunda-Feira</div>
<div class="t" style="top:381px;font-size:12px;left:430.00px;">1</div>
<div class="t" style="top:381px;font-size:12px;left:728.50px;transform:scaleX(0.9632);">2,00</div>
<div class="t" style="top:381px;font-size:12px;left:849.60px;transform:scaleX(0.9581);">99</div>
<div class="t" style="top:381px;font-size:12px;left:970.00px;transform:scaleX(0.9766);">HE 50%</div>
<div class="t" style="top:381px;font-size:12px;left:1168.30px;transform:scaleX(0.9581);">93</div>
<div class="a " style="left:286px;top:400px;width:940px;height:23px;background:#fff;border-bottom:1px solid #ededed"></div>
<div class="t" style="top:404px;font-size:12px;left:292.50px;transform:scaleX(0.9790);">2 - Segunda-Feira</div>
<div class="t" style="top:404px;font-size:12px;left:430.00px;">2</div>
<div class="t" style="top:404px;font-size:12px;left:849.60px;transform:scaleX(0.9581);">96</div>
<div class="t" style="top:404px;font-size:12px;left:970.00px;transform:scaleX(0.9763);">HE 100%</div>
<div class="t" style="top:404px;font-size:12px;left:1168.30px;transform:scaleX(0.9581);">92</div>
<div class="a " style="left:286px;top:423px;width:940px;height:23px;background:#fafafa;border-bottom:1px solid #f6f6f6"></div>
<div class="t" style="top:427px;font-size:12px;left:292.50px;transform:scaleX(1.0024);color:rgba(0,0,0,0.5);filter:blur(0.9px);text-shadow:1px 0 0.5px rgba(0,0,0,0.28),-1px 0 0.5px rgba(0,0,0,0.28),0 1px 0.5px rgba(0,0,0,0.14),0 -1px 0.5px rgba(0,0,0,0.14);">3 - Terca-Feira</div>
<div class="t" style="top:427px;font-size:12px;left:430.00px;color:rgba(0,0,0,0.5);filter:blur(0.9px);text-shadow:1px 0 0.5px rgba(0,0,0,0.28),-1px 0 0.5px rgba(0,0,0,0.28),0 1px 0.5px rgba(0,0,0,0.14),0 -1px 0.5px rgba(0,0,0,0.14);">1</div>
<div class="t" style="top:427px;font-size:12px;left:728.50px;transform:scaleX(0.9632);color:rgba(0,0,0,0.5);filter:blur(0.9px);text-shadow:1px 0 0.5px rgba(0,0,0,0.28),-1px 0 0.5px rgba(0,0,0,0.28),0 1px 0.5px rgba(0,0,0,0.14),0 -1px 0.5px rgba(0,0,0,0.14);">2,00</div>
<div class="t" style="top:427px;font-size:12px;left:849.60px;transform:scaleX(0.9581);color:rgba(0,0,0,0.5);filter:blur(0.9px);text-shadow:1px 0 0.5px rgba(0,0,0,0.28),-1px 0 0.5px rgba(0,0,0,0.28),0 1px 0.5px rgba(0,0,0,0.14),0 -1px 0.5px rgba(0,0,0,0.14);">99</div>
<div class="t" style="top:427px;font-size:12px;left:970.00px;transform:scaleX(0.9766);color:rgba(0,0,0,0.5);filter:blur(0.9px);text-shadow:1px 0 0.5px rgba(0,0,0,0.28),-1px 0 0.5px rgba(0,0,0,0.28),0 1px 0.5px rgba(0,0,0,0.14),0 -1px 0.5px rgba(0,0,0,0.14);">HE 50%</div>
<div class="t" style="top:427px;font-size:12px;left:1168.30px;transform:scaleX(0.9581);color:rgba(0,0,0,0.5);filter:blur(0.9px);text-shadow:1px 0 0.5px rgba(0,0,0,0.28),-1px 0 0.5px rgba(0,0,0,0.28),0 1px 0.5px rgba(0,0,0,0.14),0 -1px 0.5px rgba(0,0,0,0.14);">93</div>
<div class="a " style="left:286px;top:446px;width:940px;height:23px;background:#fff;border-bottom:1px solid #f6f6f6"></div>
<div class="t" style="top:450px;font-size:12px;left:292.50px;transform:scaleX(1.0024);color:rgba(0,0,0,0.5);filter:blur(0.9px);text-shadow:1px 0 0.5px rgba(0,0,0,0.28),-1px 0 0.5px rgba(0,0,0,0.28),0 1px 0.5px rgba(0,0,0,0.14),0 -1px 0.5px rgba(0,0,0,0.14);">3 - Terca-Feira</div>
<div class="t" style="top:450px;font-size:12px;left:430.00px;color:rgba(0,0,0,0.5);filter:blur(0.9px);text-shadow:1px 0 0.5px rgba(0,0,0,0.28),-1px 0 0.5px rgba(0,0,0,0.28),0 1px 0.5px rgba(0,0,0,0.14),0 -1px 0.5px rgba(0,0,0,0.14);">2</div>
<div class="t" style="top:450px;font-size:12px;left:849.60px;transform:scaleX(0.9581);color:rgba(0,0,0,0.5);filter:blur(0.9px);text-shadow:1px 0 0.5px rgba(0,0,0,0.28),-1px 0 0.5px rgba(0,0,0,0.28),0 1px 0.5px rgba(0,0,0,0.14),0 -1px 0.5px rgba(0,0,0,0.14);">96</div>
<div class="t" style="top:450px;font-size:12px;left:970.00px;transform:scaleX(0.9763);color:rgba(0,0,0,0.5);filter:blur(0.9px);text-shadow:1px 0 0.5px rgba(0,0,0,0.28),-1px 0 0.5px rgba(0,0,0,0.28),0 1px 0.5px rgba(0,0,0,0.14),0 -1px 0.5px rgba(0,0,0,0.14);">HE 100%</div>
<div class="t" style="top:450px;font-size:12px;left:1168.30px;transform:scaleX(0.9581);color:rgba(0,0,0,0.5);filter:blur(0.9px);text-shadow:1px 0 0.5px rgba(0,0,0,0.28),-1px 0 0.5px rgba(0,0,0,0.28),0 1px 0.5px rgba(0,0,0,0.14),0 -1px 0.5px rgba(0,0,0,0.14);">92</div>
<div class="a " style="left:286px;top:469px;width:940px;height:23px;background:#fafafa;border-bottom:1px solid #f6f6f6"></div>
<div class="t" style="top:473px;font-size:12px;left:292.50px;transform:scaleX(0.9899);color:rgba(0,0,0,0.5);filter:blur(0.9px);text-shadow:1px 0 0.5px rgba(0,0,0,0.28),-1px 0 0.5px rgba(0,0,0,0.28),0 1px 0.5px rgba(0,0,0,0.14),0 -1px 0.5px rgba(0,0,0,0.14);">4 - Quarta-Feira</div>
<div class="t" style="top:473px;font-size:12px;left:430.00px;color:rgba(0,0,0,0.5);filter:blur(0.9px);text-shadow:1px 0 0.5px rgba(0,0,0,0.28),-1px 0 0.5px rgba(0,0,0,0.28),0 1px 0.5px rgba(0,0,0,0.14),0 -1px 0.5px rgba(0,0,0,0.14);">1</div>
<div class="t" style="top:473px;font-size:12px;left:728.50px;transform:scaleX(0.9632);color:rgba(0,0,0,0.5);filter:blur(0.9px);text-shadow:1px 0 0.5px rgba(0,0,0,0.28),-1px 0 0.5px rgba(0,0,0,0.28),0 1px 0.5px rgba(0,0,0,0.14),0 -1px 0.5px rgba(0,0,0,0.14);">2,00</div>
<div class="t" style="top:473px;font-size:12px;left:849.60px;transform:scaleX(0.9581);color:rgba(0,0,0,0.5);filter:blur(0.9px);text-shadow:1px 0 0.5px rgba(0,0,0,0.28),-1px 0 0.5px rgba(0,0,0,0.28),0 1px 0.5px rgba(0,0,0,0.14),0 -1px 0.5px rgba(0,0,0,0.14);">99</div>
<div class="t" style="top:473px;font-size:12px;left:970.00px;transform:scaleX(0.9766);color:rgba(0,0,0,0.5);filter:blur(0.9px);text-shadow:1px 0 0.5px rgba(0,0,0,0.28),-1px 0 0.5px rgba(0,0,0,0.28),0 1px 0.5px rgba(0,0,0,0.14),0 -1px 0.5px rgba(0,0,0,0.14);">HE 50%</div>
<div class="t" style="top:473px;font-size:12px;left:1168.30px;transform:scaleX(0.9581);color:rgba(0,0,0,0.5);filter:blur(0.9px);text-shadow:1px 0 0.5px rgba(0,0,0,0.28),-1px 0 0.5px rgba(0,0,0,0.28),0 1px 0.5px rgba(0,0,0,0.14),0 -1px 0.5px rgba(0,0,0,0.14);">93</div>
<div class="a " style="left:286px;top:492px;width:940px;height:23px;background:#fff;border-bottom:1px solid #f6f6f6"></div>
<div class="t" style="top:496px;font-size:12px;left:292.50px;transform:scaleX(0.9899);color:rgba(0,0,0,0.5);filter:blur(0.9px);text-shadow:1px 0 0.5px rgba(0,0,0,0.28),-1px 0 0.5px rgba(0,0,0,0.28),0 1px 0.5px rgba(0,0,0,0.14),0 -1px 0.5px rgba(0,0,0,0.14);">4 - Quarta-Feira</div>
<div class="t" style="top:496px;font-size:12px;left:430.00px;color:rgba(0,0,0,0.5);filter:blur(0.9px);text-shadow:1px 0 0.5px rgba(0,0,0,0.28),-1px 0 0.5px rgba(0,0,0,0.28),0 1px 0.5px rgba(0,0,0,0.14),0 -1px 0.5px rgba(0,0,0,0.14);">2</div>
<div class="t" style="top:496px;font-size:12px;left:849.60px;transform:scaleX(0.9581);color:rgba(0,0,0,0.5);filter:blur(0.9px);text-shadow:1px 0 0.5px rgba(0,0,0,0.28),-1px 0 0.5px rgba(0,0,0,0.28),0 1px 0.5px rgba(0,0,0,0.14),0 -1px 0.5px rgba(0,0,0,0.14);">96</div>
<div class="t" style="top:496px;font-size:12px;left:970.00px;transform:scaleX(0.9763);color:rgba(0,0,0,0.5);filter:blur(0.9px);text-shadow:1px 0 0.5px rgba(0,0,0,0.28),-1px 0 0.5px rgba(0,0,0,0.28),0 1px 0.5px rgba(0,0,0,0.14),0 -1px 0.5px rgba(0,0,0,0.14);">HE 100%</div>
<div class="t" style="top:496px;font-size:12px;left:1168.30px;transform:scaleX(0.9581);color:rgba(0,0,0,0.5);filter:blur(0.9px);text-shadow:1px 0 0.5px rgba(0,0,0,0.28),-1px 0 0.5px rgba(0,0,0,0.28),0 1px 0.5px rgba(0,0,0,0.14),0 -1px 0.5px rgba(0,0,0,0.14);">92</div>
<div class="a " style="left:286px;top:515px;width:940px;height:23px;background:#fafafa;border-bottom:1px solid #f6f6f6"></div>
<div class="t" style="top:519px;font-size:12px;left:292.50px;transform:scaleX(0.9996);color:rgba(0,0,0,0.5);filter:blur(0.9px);text-shadow:1px 0 0.5px rgba(0,0,0,0.28),-1px 0 0.5px rgba(0,0,0,0.28),0 1px 0.5px rgba(0,0,0,0.14),0 -1px 0.5px rgba(0,0,0,0.14);">5 - Quinta-Feira</div>
<div class="t" style="top:519px;font-size:12px;left:430.00px;color:rgba(0,0,0,0.5);filter:blur(0.9px);text-shadow:1px 0 0.5px rgba(0,0,0,0.28),-1px 0 0.5px rgba(0,0,0,0.28),0 1px 0.5px rgba(0,0,0,0.14),0 -1px 0.5px rgba(0,0,0,0.14);">1</div>
<div class="t" style="top:519px;font-size:12px;left:728.50px;transform:scaleX(0.9632);color:rgba(0,0,0,0.5);filter:blur(0.9px);text-shadow:1px 0 0.5px rgba(0,0,0,0.28),-1px 0 0.5px rgba(0,0,0,0.28),0 1px 0.5px rgba(0,0,0,0.14),0 -1px 0.5px rgba(0,0,0,0.14);">2,00</div>
<div class="t" style="top:519px;font-size:12px;left:849.60px;transform:scaleX(0.9581);color:rgba(0,0,0,0.5);filter:blur(0.9px);text-shadow:1px 0 0.5px rgba(0,0,0,0.28),-1px 0 0.5px rgba(0,0,0,0.28),0 1px 0.5px rgba(0,0,0,0.14),0 -1px 0.5px rgba(0,0,0,0.14);">99</div>
<div class="t" style="top:519px;font-size:12px;left:970.00px;transform:scaleX(0.9766);color:rgba(0,0,0,0.5);filter:blur(0.9px);text-shadow:1px 0 0.5px rgba(0,0,0,0.28),-1px 0 0.5px rgba(0,0,0,0.28),0 1px 0.5px rgba(0,0,0,0.14),0 -1px 0.5px rgba(0,0,0,0.14);">HE 50%</div>
<div class="t" style="top:519px;font-size:12px;left:1168.30px;transform:scaleX(0.9581);color:rgba(0,0,0,0.5);filter:blur(0.9px);text-shadow:1px 0 0.5px rgba(0,0,0,0.28),-1px 0 0.5px rgba(0,0,0,0.28),0 1px 0.5px rgba(0,0,0,0.14),0 -1px 0.5px rgba(0,0,0,0.14);">93</div>
<div class="a " style="left:286px;top:538px;width:940px;height:23px;background:#fff;border-bottom:1px solid #f6f6f6"></div>
<div class="t" style="top:542px;font-size:12px;left:292.50px;transform:scaleX(0.9996);color:rgba(0,0,0,0.5);filter:blur(0.9px);text-shadow:1px 0 0.5px rgba(0,0,0,0.28),-1px 0 0.5px rgba(0,0,0,0.28),0 1px 0.5px rgba(0,0,0,0.14),0 -1px 0.5px rgba(0,0,0,0.14);">5 - Quinta-Feira</div>
<div class="t" style="top:542px;font-size:12px;left:430.00px;color:rgba(0,0,0,0.5);filter:blur(0.9px);text-shadow:1px 0 0.5px rgba(0,0,0,0.28),-1px 0 0.5px rgba(0,0,0,0.28),0 1px 0.5px rgba(0,0,0,0.14),0 -1px 0.5px rgba(0,0,0,0.14);">2</div>
<div class="t" style="top:542px;font-size:12px;left:849.60px;transform:scaleX(0.9581);color:rgba(0,0,0,0.5);filter:blur(0.9px);text-shadow:1px 0 0.5px rgba(0,0,0,0.28),-1px 0 0.5px rgba(0,0,0,0.28),0 1px 0.5px rgba(0,0,0,0.14),0 -1px 0.5px rgba(0,0,0,0.14);">96</div>
<div class="t" style="top:542px;font-size:12px;left:970.00px;transform:scaleX(0.9763);color:rgba(0,0,0,0.5);filter:blur(0.9px);text-shadow:1px 0 0.5px rgba(0,0,0,0.28),-1px 0 0.5px rgba(0,0,0,0.28),0 1px 0.5px rgba(0,0,0,0.14),0 -1px 0.5px rgba(0,0,0,0.14);">HE 100%</div>
<div class="t" style="top:542px;font-size:12px;left:1168.30px;transform:scaleX(0.9581);color:rgba(0,0,0,0.5);filter:blur(0.9px);text-shadow:1px 0 0.5px rgba(0,0,0,0.28),-1px 0 0.5px rgba(0,0,0,0.28),0 1px 0.5px rgba(0,0,0,0.14),0 -1px 0.5px rgba(0,0,0,0.14);">92</div>
<div class="a " style="left:286px;top:561px;width:940px;height:23px;background:#fafafa;border-bottom:1px solid #f6f6f6"></div>
<div class="t" style="top:565px;font-size:12px;left:292.50px;transform:scaleX(0.9892);color:rgba(0,0,0,0.5);filter:blur(0.9px);text-shadow:1px 0 0.5px rgba(0,0,0,0.28),-1px 0 0.5px rgba(0,0,0,0.28),0 1px 0.5px rgba(0,0,0,0.14),0 -1px 0.5px rgba(0,0,0,0.14);">6 - Sexta-Feira</div>
<div class="t" style="top:565px;font-size:12px;left:430.00px;color:rgba(0,0,0,0.5);filter:blur(0.9px);text-shadow:1px 0 0.5px rgba(0,0,0,0.28),-1px 0 0.5px rgba(0,0,0,0.28),0 1px 0.5px rgba(0,0,0,0.14),0 -1px 0.5px rgba(0,0,0,0.14);">1</div>
<div class="t" style="top:565px;font-size:12px;left:728.50px;transform:scaleX(0.9632);color:rgba(0,0,0,0.5);filter:blur(0.9px);text-shadow:1px 0 0.5px rgba(0,0,0,0.28),-1px 0 0.5px rgba(0,0,0,0.28),0 1px 0.5px rgba(0,0,0,0.14),0 -1px 0.5px rgba(0,0,0,0.14);">2,00</div>
<div class="t" style="top:565px;font-size:12px;left:849.60px;transform:scaleX(0.9581);color:rgba(0,0,0,0.5);filter:blur(0.9px);text-shadow:1px 0 0.5px rgba(0,0,0,0.28),-1px 0 0.5px rgba(0,0,0,0.28),0 1px 0.5px rgba(0,0,0,0.14),0 -1px 0.5px rgba(0,0,0,0.14);">99</div>
<div class="t" style="top:565px;font-size:12px;left:970.00px;transform:scaleX(0.9766);color:rgba(0,0,0,0.5);filter:blur(0.9px);text-shadow:1px 0 0.5px rgba(0,0,0,0.28),-1px 0 0.5px rgba(0,0,0,0.28),0 1px 0.5px rgba(0,0,0,0.14),0 -1px 0.5px rgba(0,0,0,0.14);">HE 50%</div>
<div class="t" style="top:565px;font-size:12px;left:1168.30px;transform:scaleX(0.9581);color:rgba(0,0,0,0.5);filter:blur(0.9px);text-shadow:1px 0 0.5px rgba(0,0,0,0.28),-1px 0 0.5px rgba(0,0,0,0.28),0 1px 0.5px rgba(0,0,0,0.14),0 -1px 0.5px rgba(0,0,0,0.14);">93</div>
<div class="a " style="left:286px;top:584px;width:940px;height:23px;background:#fff;border-bottom:1px solid #f6f6f6"></div>
<div class="t" style="top:588px;font-size:12px;left:292.50px;transform:scaleX(0.9892);color:rgba(0,0,0,0.5);filter:blur(0.9px);text-shadow:1px 0 0.5px rgba(0,0,0,0.28),-1px 0 0.5px rgba(0,0,0,0.28),0 1px 0.5px rgba(0,0,0,0.14),0 -1px 0.5px rgba(0,0,0,0.14);">6 - Sexta-Feira</div>
<div class="t" style="top:588px;font-size:12px;left:430.00px;color:rgba(0,0,0,0.5);filter:blur(0.9px);text-shadow:1px 0 0.5px rgba(0,0,0,0.28),-1px 0 0.5px rgba(0,0,0,0.28),0 1px 0.5px rgba(0,0,0,0.14),0 -1px 0.5px rgba(0,0,0,0.14);">2</div>
<div class="t" style="top:588px;font-size:12px;left:849.60px;transform:scaleX(0.9581);color:rgba(0,0,0,0.5);filter:blur(0.9px);text-shadow:1px 0 0.5px rgba(0,0,0,0.28),-1px 0 0.5px rgba(0,0,0,0.28),0 1px 0.5px rgba(0,0,0,0.14),0 -1px 0.5px rgba(0,0,0,0.14);">96</div>
<div class="t" style="top:588px;font-size:12px;left:970.00px;transform:scaleX(0.9763);color:rgba(0,0,0,0.5);filter:blur(0.9px);text-shadow:1px 0 0.5px rgba(0,0,0,0.28),-1px 0 0.5px rgba(0,0,0,0.28),0 1px 0.5px rgba(0,0,0,0.14),0 -1px 0.5px rgba(0,0,0,0.14);">HE 100%</div>
<div class="t" style="top:588px;font-size:12px;left:1168.30px;transform:scaleX(0.9581);color:rgba(0,0,0,0.5);filter:blur(0.9px);text-shadow:1px 0 0.5px rgba(0,0,0,0.28),-1px 0 0.5px rgba(0,0,0,0.28),0 1px 0.5px rgba(0,0,0,0.14),0 -1px 0.5px rgba(0,0,0,0.14);">92</div>
<div class="a " style="left:499px;top:353px;width:5px;height:250px;background:#e6eefa;filter:blur(0.7px)"></div>
<div class="a " style="left:501px;top:353px;width:1px;height:250px;background:#c9dbf4"></div>
<div class="a " style="left:501px;top:377px;width:1px;height:49px;background:#9fbde9"></div>
<div class="a sb" style="left:1227px;top:353px;width:12px;height:254px;"></div>
<div class="a th" style="left:1229px;top:371px;width:10px;height:150px;"></div>
<svg class="a" style="left:1231.5px;top:361px;" width="7.5" height="4.5" viewBox="0 0 7.5 4.5"><polygon points="0,4.5 3.75,0 7.5,4.5" fill="#a3a3a3"/></svg>
<svg class="a" style="left:1231.5px;top:595.5px;" width="7.5" height="4.8" viewBox="0 0 7.5 4.8"><polygon points="0,0 7.5,0 3.75,4.8" fill="#454545"/></svg>
<div class="a sb" style="left:286px;top:607px;width:941px;height:12px;"></div>
<svg class="a" style="left:292px;top:612.5px;" width="4.3" height="9" viewBox="0 0 4.3 9"><polygon points="4.3,0 4.3,9 0,4.5" fill="#a3a3a3"/></svg>
<svg class="a" style="left:491px;top:612.5px;" width="4.3" height="9" viewBox="0 0 4.3 9"><polygon points="0,0 4.3,4.5 0,9" fill="#a3a3a3"/></svg>
<svg class="a" style="left:507.8px;top:612.5px;" width="4.3" height="9" viewBox="0 0 4.3 9"><polygon points="4.3,0 4.3,9 0,4.5" fill="#a3a3a3"/></svg>
<div class="a th" style="left:519px;top:610px;width:231px;height:9px;"></div>
<svg class="a" style="left:1215px;top:612.5px;" width="4.3" height="9" viewBox="0 0 4.3 9"><polygon points="0,0 4.3,4.5 0,9" fill="#505050"/></svg>
<div class="a " style="left:501px;top:603px;width:1px;height:16px;background:#8fb3e6"></div>
<div class="a " style="left:1227px;top:607px;width:12px;height:12px;background:#fff"></div>
<div class="a " style="left:282px;top:619px;width:958px;height:1px;background:#99bbe8"></div>
<div class="a " style="left:277px;top:292px;width:6px;height:38px;background:#e2e0de;border-radius:6px 0 0 6px/19px 0 0 19px"></div>
<svg class="a" style="left:278px;top:308.5px;" width="3" height="6" viewBox="0 0 3 6"><polygon points="3,0 3,6 0,3.0" fill="#111"/></svg>
<div class="a " style="left:284px;top:114px;width:953px;height:26px;border:3px solid #0aa888"></div>
<div class="a " style="left:284px;top:375.5px;width:946px;height:51px;border:3px solid #0aa888"></div>
<div class="a " style="left:1240px;top:0px;width:4px;height:620px;background:#fff"></div>
<div class="a " style="left:1240px;top:107px;width:5px;height:40px;background:#000;border-radius:0 6px 6px 0/0 8px 8px 0"></div>
<div class="a " style="left:1240px;top:381px;width:5px;height:40px;background:#000;border-radius:0 6px 6px 0/0 8px 8px 0"></div>
<div class="a" style="left:1203px;top:106.9px;width:40.200px;height:40.200px;border-radius:50%;background:#0aa888;box-shadow:0 0 3px rgba(0,0,0,0.35)"></div>
<div class="t" style="top:111px;font-size:29px;left:1214.50px;color:#fff;line-height:34px;height:34px;">1</div>
<div class="a" style="left:1203px;top:380.9px;width:40.200px;height:40.200px;border-radius:50%;background:#0aa888;box-shadow:0 0 3px rgba(0,0,0,0.35)"></div>
<div class="t" style="top:385px;font-size:29px;left:1214.50px;color:#fff;line-height:34px;height:34px;">2</div>
</body>
</html>
